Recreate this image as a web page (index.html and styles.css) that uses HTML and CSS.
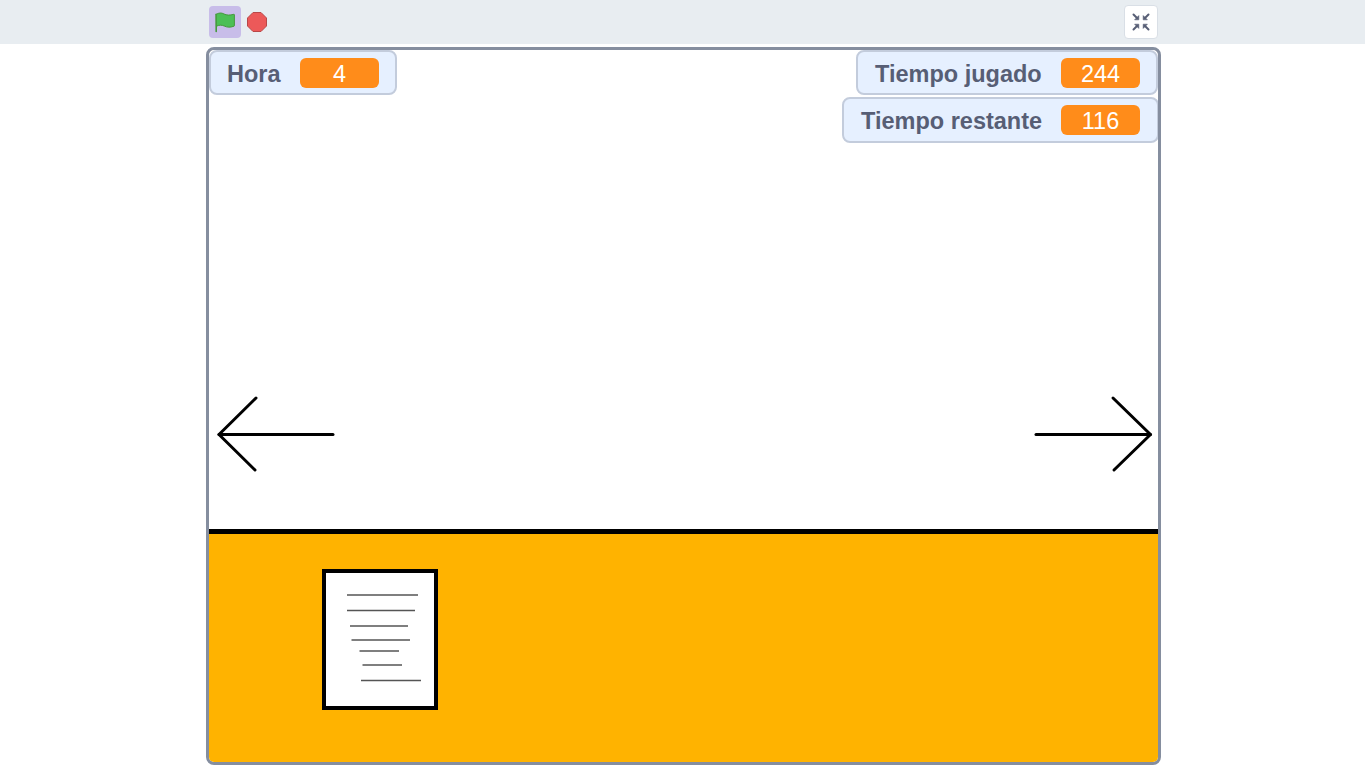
FILE: index.html
```html
<!DOCTYPE html>
<html lang="es">
<head>
<meta charset="utf-8">
<title>Scratch</title>
<link rel="stylesheet" href="styles.css">
</head>
<body>
<header class="controls">
  <div class="controls-inner">
    <div class="controls-left">
      <button class="flag" aria-label="Bandera verde">
        <svg class="flag-icon" width="22" height="22" viewBox="0 0 22 22">
          <path d="M2.200 20.500V3.200" fill="none" stroke="#45993d" stroke-width="1.600" stroke-linecap="round"/>
          <path d="M2.200 3.400C5 1.600 7.600 1.600 10 3c2.600 1.300 5.600 1.500 9.800 0.300c0.400-0.100 0.600 0.100 0.600 0.500V14.600c0 .3-.1.500-.4.600c-3.800 1.400-7 1.200-9.800-.2c-2.400-1.100-5.200-1.200-7.800 .3Z" fill="#4cbf56" stroke="#45993d" stroke-width="1"/>
        </svg>
      </button>
      <svg class="stop" width="22" height="22" viewBox="0 0 22 22">
        <polygon points="7,1.500 15,1.500 20.500,7 20.500,15 15,20.500 7,20.500 1.500,15 1.500,7" fill="#ec5959" stroke="#b84848" stroke-width="1"/>
      </svg>
    </div>
    <button class="fullscreen" aria-label="Salir de pantalla completa">
      <svg width="18" height="18" viewBox="0 0 18 18" fill="#575e75" stroke="#575e75" stroke-linejoin="round">
        <path d="M6.800 6.800V2.600L2.600 6.800Z" stroke-width=".6"/>
        <path d="M11.200 6.800V2.600L15.400 6.800Z" stroke-width=".6"/>
        <path d="M6.800 11.200V15.400L2.600 11.200Z" stroke-width=".6"/>
        <path d="M11.200 11.200V15.400L15.400 11.200Z" stroke-width=".6"/>
        <path d="M1.500 1.500 4.500 4.500M16.500 1.500 13.500 4.500M1.500 16.500 4.500 13.500M16.500 16.500 13.500 13.500" fill="none" stroke-width="2" stroke-linecap="round"/>
      </svg>
    </button>
  </div>
</header>
<main class="stage">
  <div class="sky"></div>
  <div class="ground-line"></div>
  <div class="ground"></div>

  <svg class="scene" width="950" height="713" viewBox="209 50 950 713">
    <g fill="none" stroke="#000" stroke-linecap="round" stroke-linejoin="round" stroke-width="3">
      <path d="M333 434.500H219"/>
      <path d="M256 398 219 434.500 255 470"/>
      <path d="M1036 434.500H1150.500"/>
      <path d="M1113 398 1150.500 434.500 1114 470"/>
    </g>
    <rect x="324" y="571" width="112" height="137" fill="#fff" stroke="#000" stroke-width="4"/>
    <g stroke="#555" stroke-width="1.400" fill="none">
      <path d="M347 595H418"/>
      <path d="M347 610.500H415"/>
      <path d="M350 626H408"/>
      <path d="M351.500 640H410"/>
      <path d="M359.500 651H399"/>
      <path d="M362.500 665H402"/>
      <path d="M361 680.500H421"/>
    </g>
  </svg>

  <div class="monitor monitor-hora">
    <span class="monitor-label">Hora</span>
    <span class="monitor-value">4</span>
  </div>
  <div class="monitor monitor-jugado">
    <span class="monitor-label">Tiempo jugado</span>
    <span class="monitor-value">244</span>
  </div>
  <div class="monitor monitor-restante">
    <span class="monitor-label">Tiempo restante</span>
    <span class="monitor-value">116</span>
  </div>
</main>
</body>
</html>
```
FILE: styles.css
```css
* { box-sizing: border-box; }

html, body {
  margin: 0;
  padding: 0;
  height: 767px;
  overflow: hidden;
  background: #fff;
  font-family: "Liberation Sans", Arial, sans-serif;
}

.controls {
  height: 44px;
  background: #e8edf1;
}

.controls-inner {
  width: 950px;
  margin-left: 209px;
  height: 44px;
  display: flex;
  align-items: flex-start;
  justify-content: space-between;
}

.controls-left {
  display: flex;
  align-items: center;
  gap: 5px;
  margin-top: 6px;
}

.flag {
  width: 32px;
  height: 32px;
  padding: 0;
  border: 0;
  border-radius: 4px;
  background: #c8bde9;
  display: flex;
  align-items: center;
  justify-content: center;
}

.stop { display: block; }

.fullscreen {
  width: 34px;
  height: 34px;
  margin-top: 5px;
  margin-right: 1px;
  padding: 0;
  border: 1px solid #d9dfe6;
  border-radius: 4px;
  background: #fff;
  display: flex;
  align-items: center;
  justify-content: center;
}

.stage {
  position: relative;
  width: 955px;
  height: 718px;
  margin: 3px 0 0 206px;
  border: 3px solid #858e9f;
  border-radius: 8px;
  overflow: hidden;
  display: flex;
  flex-direction: column;
  background: #fff;
}

.sky { height: 479px; }
.ground-line { height: 5px; background: #000; }
.ground { flex: 1; background: #ffb300; }

.scene {
  position: absolute;
  left: 0;
  top: 0;
}

.monitor {
  position: absolute;
  display: flex;
  align-items: center;
  justify-content: space-between;
  height: 45px;
  border: 2px solid #c3ccdc;
  border-radius: 8px;
  background: #e6f0ff;
  padding: 1px 16px 0 17px;
}

.monitor-hora { left: 0; top: 0; width: 188px; padding-left: 16px; padding-right: 16px; }
.monitor-jugado { right: 0; top: 0; width: 302px; }
.monitor-restante { right: -1px; top: 47px; width: 317px; height: 46px; padding-top: 0; padding-right: 17px; }

.monitor-label {
  position: relative;
  top: 1px;
  font-size: 23.500px;
  font-weight: 700;
  color: #575e75;
}

.monitor-value {
  width: 79px;
  height: 30px;
  border-radius: 6px;
  background: #ff8c1a;
  color: #fff;
  font-size: 23.500px;
  line-height: 33px;
  text-align: center;
}
```
